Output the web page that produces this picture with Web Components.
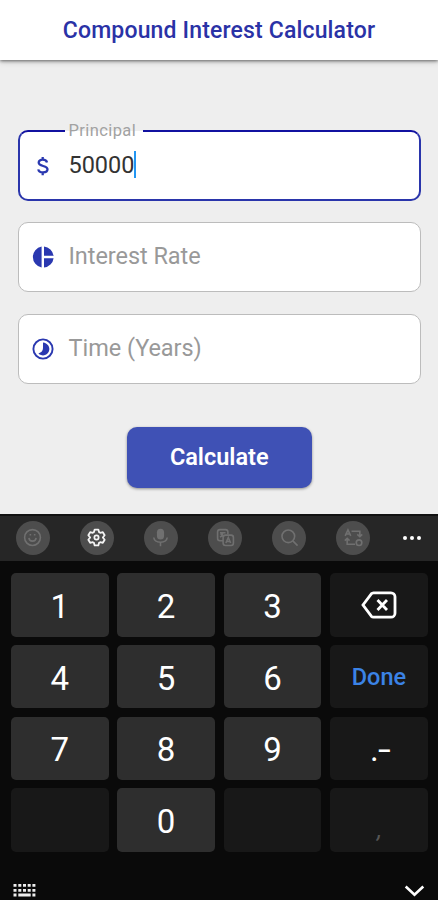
<!DOCTYPE html>
<html lang="en">
<head>
<meta charset="utf-8">
<title>Compound Interest Calculator</title>
<style>
html,body{margin:0;height:100%}
body{font-family:Roboto,"Liberation Sans",sans-serif;background:#eee;overflow:hidden}
</style>
</head>
<body>
<calc-app></calc-app>
<script>
const define = (name, html) => customElements.define(name, class extends HTMLElement {
  constructor() {
    super();
    const t = document.createElement('template');
    t.innerHTML = html;
    this.attachShadow({mode: 'open'}).append(t.content.cloneNode(true));
  }
});

define('app-header', `<style>
:host{display:flex;box-sizing:border-box;height:60px;flex:none;align-items:center;justify-content:center;background:#fff;color:#2a32a6;font-size:23px;font-weight:500;letter-spacing:.16px;white-space:nowrap;box-shadow:0 1px 3px rgba(0,0,0,.5),0 2px 6px rgba(0,0,0,.16);position:relative}
</style><slot></slot>`);

define('text-field', `<style>
:host{display:flex;position:relative;box-sizing:border-box;height:70px;align-items:center;border:1.3px solid #bcbcbc;border-radius:10px;background:#fff;color:#999;font-size:23.5px;white-space:nowrap}
:host([focused]){height:70.500px;margin-bottom:-.5px;border:2px solid #2a35ab;border-top-color:#1111a0;color:#333}
.icon{display:flex;width:24px;height:24px;margin-left:12px;margin-right:14px;color:#2a38b0}
:host([focused]) .icon{margin-left:11px}
.value{display:flex;align-items:center;letter-spacing:-.05px;padding-bottom:2px}
.label{display:none;position:absolute;z-index:0;left:45px;top:-11px;padding:0 7px 0 4px;font-size:16.5px;line-height:20px;letter-spacing:.4px;color:#a2a2a2}
:host([focused]) .label{display:block}
.label::before{content:"";position:absolute;z-index:-1;left:0;right:0;top:8px;height:4px;background:linear-gradient(#eee 50%,#fff 50%)}
</style><span class="label"><slot name="label"></slot></span><span class="icon"><slot name="icon"></slot></span><span class="value"><slot></slot></span>`);

define('text-caret', `<style>:host{display:block;width:2px;height:27px;background:#2196f3}</style>`);

define('raised-button', `<style>
:host{display:flex;box-sizing:border-box;width:184.5px;height:61.5px;align-items:center;justify-content:center;border-radius:10px;background:#3f51b5;color:#fff;font-size:23.5px;font-weight:600;letter-spacing:0;box-shadow:0 1px 3px rgba(0,0,0,.4)}
</style><slot></slot>`);

const icons = {
  dollar: '<path d="M16 8.400c-.4-1.800-1.900-2.700-4.200-2.700-2.500 0-4.100 1.100-4.100 2.900 0 4.400 8.800 2.400 8.800 6.700 0 1.900-1.700 3.100-4.500 3.100-2.600 0-4.400-1.100-4.700-3.100M11.700 3v3M11.700 18v3.300" fill="none" stroke="currentColor" stroke-width="2.300"/>',
  pie: '<path d="M10.600 1.400v21.200A10.800 10.800 0 0 1 10.600 1.400zM13 1.400A10.800 10.800 0 0 1 22.600 10.700H13zM13 13.200h9.600A10.800 10.800 0 0 1 13 22.600z" fill="currentColor"/>',
  time: '<circle cx="12" cy="12" r="9.600" fill="none" stroke="currentColor" stroke-width="1.900"/><path d="M12 5.600a6.400 6.400 0 1 1-4.600 10.900Q12 15 12 11z" fill="currentColor"/>',
  smile: '<circle cx="12" cy="12" r="10"/><path d="M7.500 12.500c.5 5.500 8.500 5.500 9 0M9.300 7.500v2M14.700 7.500v2"/>',
  gear: '<path stroke-linejoin="round" stroke-width="2.300" d="M9.700 2h4.600l.9 3.200 1.600.9 3.200-.8 2.300 3.900-2.300 2.800 2.300 2.800-2.300 3.900-3.200-.8-1.600.9-.9 3.200H9.700l-.9-3.200-1.600-.9-3.200.8-2.300-3.900L4 12 1.700 9.200 4 5.300l3.200.8 1.600-.9z"/><circle cx="12" cy="12" r="2.700" stroke-width="2.200"/>',
  mic: '<rect x="7.500" y="1" width="9" height="13.500" rx="4.500" fill="currentColor" stroke="none"/><path d="M3.500 12c1 8 16 8 17 0M12 18v5"/>',
  translate: '<path d="M9 16H5a3 3 0 0 1-3-3V5a3 3 0 0 1 3-3h7a3 3 0 0 1 3 3v3M5 6h7M8.500 5v1c0 3-1.500 4.500-3.500 5.500M6 7c1 2 2 3 3 3.700"/><rect x="9" y="9" width="13" height="13" rx="3"/><path d="M12.500 19l3-7 3 7M13.500 17h4"/>',
  search: '<circle cx="10.500" cy="10.500" r="8"/><path d="M16.200 16.200l6 6"/>',
  convert: '<path d="M1.500 10l3.500-7.500L8.500 10M2.800 7.500h4.500M9.500 4H20v7M16.800 8L20 11l3-3M4 13v7.500h10M1 16l3-3 3 3"/><circle cx="19" cy="18.500" r="3.500"/>'
};

customElements.define('ui-icon', class extends HTMLElement {
  connectedCallback() {
    if (this.shadowRoot) return;
    const name = this.getAttribute('name');
    const stroke = ['pie', 'time', 'dollar'].includes(name) ? 'none' : 'currentColor';
    this.attachShadow({mode: 'open'}).innerHTML = `<style>:host{display:block;width:24px;height:24px}svg{display:block;width:100%;height:100%}</style><svg viewBox="0 0 24 24" fill="none" stroke="${stroke}" stroke-width="2">${icons[name]}</svg>`;
  }
});

define('tool-button', `<style>
:host{display:flex;flex:none;width:34px;height:34px;border-radius:50%;align-items:center;justify-content:center;background:#4d4d4d;color:#707070}
:host([active]){color:#f4f4f4}
::slotted(ui-icon){width:19px;height:19px}
</style><slot></slot>`);

define('key-cap', `<style>
:host{display:flex;box-sizing:border-box;align-items:center;justify-content:center;border-radius:5px;background:#2e2e2e;color:#fff;font-size:33px;line-height:1;padding:3px 0 0 0}
:host([dark]){background:#181818}
:host([done]){color:#3b83e6;font-size:23.500px;font-weight:500;padding:3px 0 0}
:host([erase]){padding:1px 0 0}
:host([minus]){padding:3px 1px 0 0}
:host([comma]){color:#555;font-size:24px;padding:19px 0 0 1px;font-style:italic}
::slotted(.dash){display:inline-block;transform:scaleX(1.400);transform-origin:left;margin-left:-1px}
</style><slot></slot>`);

define('number-keyboard', `<style>
:host{display:flex;flex:none;flex-direction:column;height:386px;background:#0a0a0a}
.tools{display:flex;box-sizing:border-box;height:47px;align-items:center;padding:0 0 2px 15.5px;gap:30.200px;background:#262626;border-top:2px solid #111}
.dots{display:flex;gap:2.800px;padding-left:2.500px}
.dots i{width:4px;height:4px;border-radius:50%;background:#fff}
.keys{display:grid;grid-template-columns:repeat(4,97.500px);grid-auto-rows:63.500px;gap:8.300px 8.900px;padding:12px 0 0 11px}
.foot{display:flex;justify-content:space-between;align-items:flex-start;padding:32.500px 13px 0 13px}
svg{display:block}
</style>
<div class="tools">
<tool-button><ui-icon name="smile"></ui-icon></tool-button>
<tool-button active><ui-icon name="gear"></ui-icon></tool-button>
<tool-button><ui-icon name="mic"></ui-icon></tool-button>
<tool-button><ui-icon name="translate"></ui-icon></tool-button>
<tool-button><ui-icon name="search"></ui-icon></tool-button>
<tool-button><ui-icon name="convert"></ui-icon></tool-button>
<span class="dots"><i></i><i></i><i></i></span>
</div>
<div class="keys">
<key-cap>1</key-cap><key-cap>2</key-cap><key-cap>3</key-cap>
<key-cap dark erase><svg width="36" height="28" viewBox="0 0 36 28" fill="none" stroke="#fff" stroke-width="2.800"><path d="M12.500 1.800H30a4 4 0 0 1 4 4v16.400a4 4 0 0 1-4 4H12.500a3 3 0 0 1-2.200-1L2 14l8.300-11.200a3 3 0 0 1 2.200-1z"/><path d="M16.500 9l9.500 10M26 9l-9.500 10"/></svg></key-cap>
<key-cap>4</key-cap><key-cap>5</key-cap><key-cap>6</key-cap><key-cap dark done>Done</key-cap>
<key-cap>7</key-cap><key-cap>8</key-cap><key-cap>9</key-cap><key-cap dark minus>.<span class="dash">-</span></key-cap>
<key-cap dark></key-cap><key-cap>0</key-cap><key-cap dark></key-cap><key-cap dark comma>,</key-cap>
</div>
<div class="foot">
<svg width="23" height="14" viewBox="0 0 23 14" fill="#eee"><path d="M.5 0h3v2.800h-3zM5.300 0h3v2.800h-3zM10 0h3v2.800h-3zM14.700 0h3v2.800h-3zM19.400 0h3v2.800h-3zM.5 4.900h3v2.800h-3zM5.300 4.900h3v2.800h-3zM10 4.900h3v2.800h-3zM14.700 4.900h3v2.800h-3zM19.400 4.900h3v2.800h-3zM.5 9.600h3v2.900h-3zM5.300 9.600h12.400v2.900H5.300zM19.400 9.600h3v2.900h-3z"/></svg>
<svg width="21" height="14" viewBox="0 0 21 14" fill="none" stroke="#fff" stroke-width="2.600"><path d="M1.700 2.500l8.800 8.300 8.800-8.300"/></svg>
</div>`);

define('calc-app', `<style>
:host{display:flex;flex-direction:column;height:900px;background:#eee}
main{display:flex;flex-direction:column;flex:1;box-sizing:border-box;gap:21.750px;padding:70.300px 17px 0 17.500px}
raised-button{align-self:center;margin-top:21.200px}
</style>
<app-header>Compound Interest Calculator</app-header>
<main>
<text-field focused><span slot="label">Principal</span><ui-icon slot="icon" name="dollar"></ui-icon>50000<text-caret></text-caret></text-field>
<text-field><ui-icon slot="icon" name="pie"></ui-icon>Interest Rate</text-field>
<text-field><ui-icon slot="icon" name="time"></ui-icon>Time (Years)</text-field>
<raised-button>Calculate</raised-button>
</main>
<number-keyboard></number-keyboard>`);
</script>
</body>
</html>
